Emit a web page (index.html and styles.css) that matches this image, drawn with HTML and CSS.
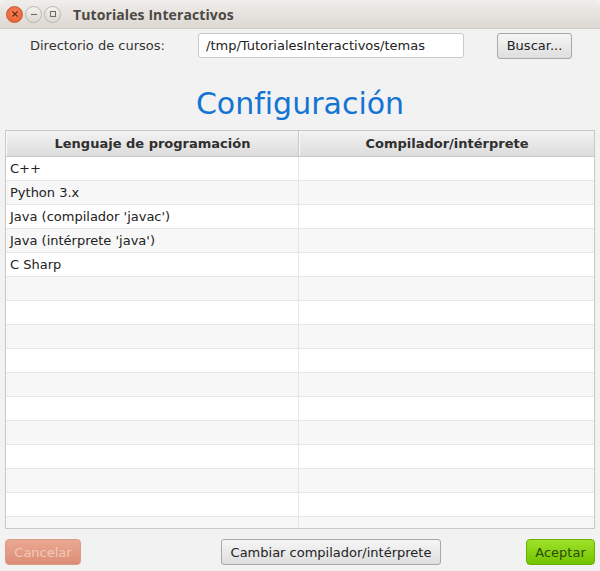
FILE: index.html
```html
<!DOCTYPE html>
<html lang="es">
<head>
<meta charset="utf-8">
<link rel="stylesheet" href="styles.css">
</head>
<body>
<div class="window">
  <div class="titlebar">
    <div class="controls">
      <span class="ctl close"><svg width="8" height="8" viewBox="0 0 8 8"><path d="M1.5 1.5 L6.5 6.5 M6.5 1.5 L1.5 6.5" stroke="#6b2a12" stroke-width="1.3"/></svg></span>
      <span class="ctl"><svg width="8" height="8" viewBox="0 0 8 8"><path d="M1 4.5 H7" stroke="#6a6a6a" stroke-width="1.1"/></svg></span>
      <span class="ctl"><svg width="8" height="8" viewBox="0 0 8 8"><rect x="1.5" y="1.5" width="5" height="5" fill="none" stroke="#6a6a6a" stroke-width="1"/></svg></span>
    </div>
    <div class="title">Tutoriales Interactivos</div>
  </div>
  <div class="content">
    <div class="dirrow">
      <span class="dirlabel">Directorio de cursos:</span>
      <div class="field">/tmp/TutorialesInteractivos/temas</div>
      <button class="btn buscar">Buscar...</button>
    </div>
    <h1 class="heading">Configuración</h1>
    <div class="table">
      <div class="thead">
        <div class="th">Lenguaje de programación</div>
        <div class="th">Compilador/intérprete</div>
      </div>
      <div class="tbody">
        <div class="tr"><div class="td">C++</div><div class="td"></div></div>
        <div class="tr"><div class="td">Python 3.x</div><div class="td"></div></div>
        <div class="tr"><div class="td">Java (compilador 'javac')</div><div class="td"></div></div>
        <div class="tr"><div class="td">Java (intérprete 'java')</div><div class="td"></div></div>
        <div class="tr"><div class="td">C Sharp</div><div class="td"></div></div>
        <div class="tr"><div class="td"></div><div class="td"></div></div>
        <div class="tr"><div class="td"></div><div class="td"></div></div>
        <div class="tr"><div class="td"></div><div class="td"></div></div>
        <div class="tr"><div class="td"></div><div class="td"></div></div>
        <div class="tr"><div class="td"></div><div class="td"></div></div>
        <div class="tr"><div class="td"></div><div class="td"></div></div>
        <div class="tr"><div class="td"></div><div class="td"></div></div>
        <div class="tr"><div class="td"></div><div class="td"></div></div>
        <div class="tr"><div class="td"></div><div class="td"></div></div>
        <div class="tr"><div class="td"></div><div class="td"></div></div>
        <div class="tr"><div class="td"></div><div class="td"></div></div>
      </div>
    </div>
    <div class="footer">
      <button class="btn cancel">Cancelar</button>
      <button class="btn cambiar">Cambiar compilador/intérprete</button>
      <button class="btn accept">Aceptar</button>
    </div>
  </div>
</div>
</body>
</html>
```

FILE: styles.css
```css
html, body {
  margin: 0;
  padding: 0;
  background: #f2f2f2;
}
body {
  width: 600px;
  height: 571px;
  overflow: hidden;
  font-family: "DejaVu Sans", sans-serif;
  font-size: 13px;
  color: #333;
}
.window {
  width: 600px;
  height: 571px;
  display: flex;
  flex-direction: column;
}
.titlebar {
  height: 29px;
  box-sizing: border-box;
  background: linear-gradient(#f0eeeb, #dcd7d1);
  border-radius: 6px 6px 0 0;
  border-bottom: 1px solid #cfcac4;
  display: flex;
  align-items: center;
  padding-left: 6px;
}
.controls {
  display: flex;
  gap: 2px;
}
.ctl {
  width: 17px;
  height: 17px;
  border-radius: 50%;
  box-sizing: border-box;
  border: 1px solid #b9b5af;
  background: linear-gradient(#f4f2ef, #dcd8d3);
  display: flex;
  align-items: center;
  justify-content: center;
}
.ctl.close {
  border-color: #c85a34;
  background: radial-gradient(circle at 50% 40%, #f6865a, #e5582b);
}
.title {
  margin-left: 12px;
  font-family: "Open Sans", "DejaVu Sans", sans-serif;
  font-weight: 700;
  font-size: 14px;
  color: #4b4944;
  letter-spacing: 0.1px;
}
.content {
  flex: 1;
  display: flex;
  flex-direction: column;
  padding: 4px 5px 5px 5px;
}
.dirrow {
  height: 25px;
  display: flex;
  align-items: center;
}
.dirlabel {
  margin-left: 25px;
  width: 168px;
}
.field {
  width: 266px;
  height: 25px;
  box-sizing: border-box;
  border: 1px solid #c9c9c9;
  border-radius: 3px;
  background: #fff;
  padding-left: 7px;
  line-height: 23px;
  color: #222;
  font-size: 13px;
}
.btn {
  font-family: "DejaVu Sans", sans-serif;
  font-size: 13px;
  height: 26px;
  box-sizing: border-box;
  border-radius: 3px;
  border: 1px solid #a8a8a8;
  background: linear-gradient(#f6f6f6, #dedede);
  color: #222;
  padding: 0 8px;
  margin: 0;
}
.buscar {
  margin-left: 33px;
  width: 75px;
}
.heading {
  margin: 0;
  height: 72px;
  box-sizing: border-box;
  padding-top: 28px;
  text-align: center;
  font-weight: 400;
  font-size: 30px;
  line-height: 36px;
  color: #1474d4;
}
.table {
  height: 399px;
  box-sizing: border-box;
  border: 1px solid #c8c8c8;
  background: #f7f7f7;
  overflow: hidden;
  display: flex;
  flex-direction: column;
}
.thead {
  display: grid;
  grid-template-columns: 293px 1fr;
  height: 26px;
  flex: none;
  border-bottom: 1px solid #c8c8c8;
  box-sizing: border-box;
  background: linear-gradient(#f3f3f3, #dcdcdc);
}
.th {
  font-weight: 700;
  color: #2f2f2f;
  text-align: center;
  line-height: 25px;
  border-left: 1px solid #fafafa;
  border-right: 1px solid #c8c8c8;
}
.th:last-child {
  border-right: none;
}
.tr {
  display: grid;
  grid-template-columns: 293px 1fr;
  height: 24px;
  box-sizing: border-box;
  border-bottom: 1px solid #e6e6e6;
  background: #fff;
}
.tr:nth-child(even) {
  background: #f7f7f7;
}
.td {
  border-right: 1px solid #e6e6e6;
  padding-left: 4px;
  line-height: 23px;
  color: #222;
}
.td:last-child {
  border-right: none;
}
.footer {
  margin-top: 10px;
  display: flex;
  align-items: center;
}
.cancel {
  width: 76px;
  border-color: #d99a86;
  background: linear-gradient(#eba891, #dc8d77);
  color: #f2c9bb;
  border-radius: 4px;
}
.cambiar {
  width: 220px;
  margin-left: 140px;
}
.accept {
  width: 69px;
  margin-left: auto;
  border-color: #6cae00;
  background: linear-gradient(#9ee22a, #72c400);
  color: #2d4a00;
  border-radius: 4px;
}
```
